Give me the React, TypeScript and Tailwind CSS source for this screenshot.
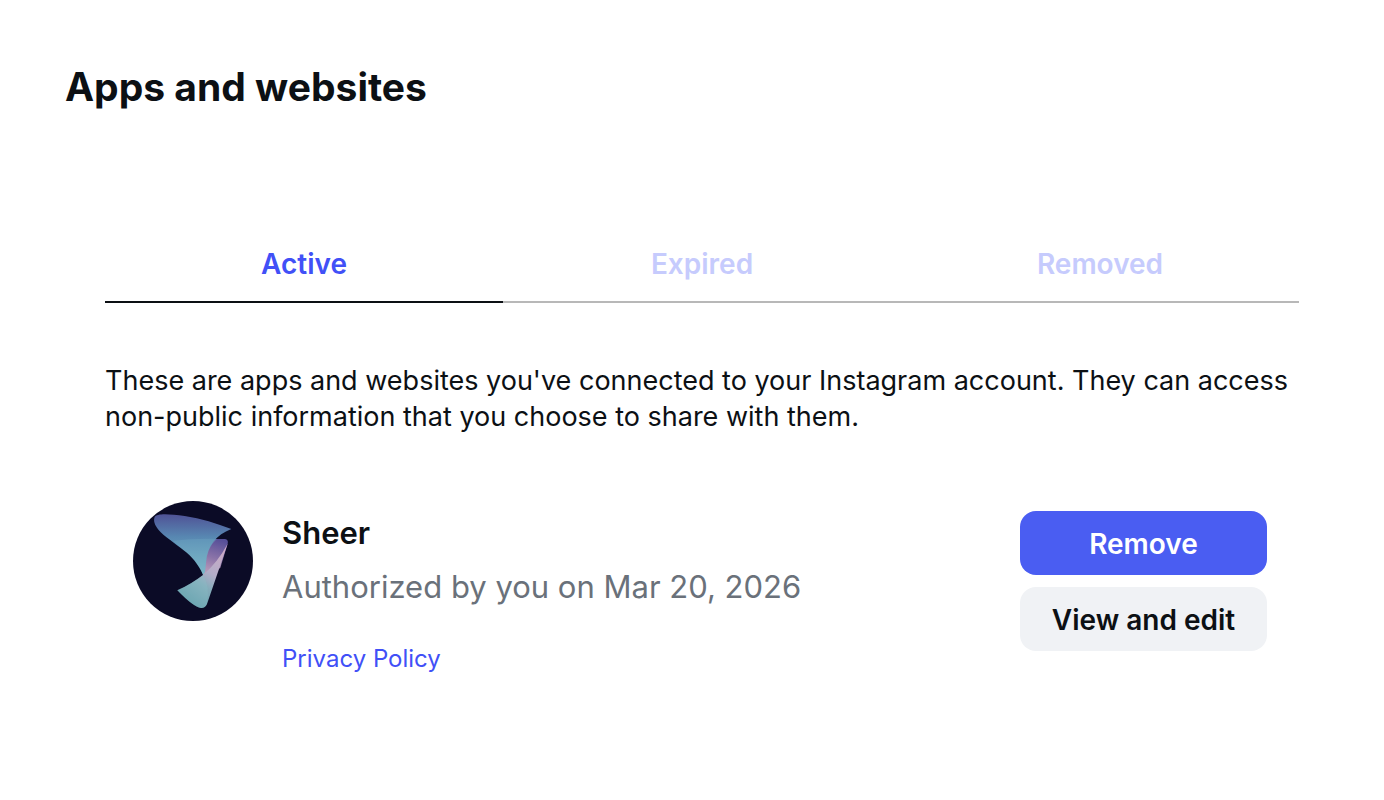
import { useState } from "react";

const tabs = ["Active", "Expired", "Removed"];

function SheerLogo() {
  return (
    <svg
      viewBox="0 0 360 360"
      className="size-[120px] shrink-0"
      role="img"
      aria-label="Sheer"
    >
      <defs>
        <linearGradient id="sail" x1="0" y1="0" x2="0" y2="1">
          <stop offset="0" stopColor="#4f5296" />
          <stop offset="0.38" stopColor="#5888b2" />
          <stop offset="0.65" stopColor="#6a9fbc" />
          <stop offset="1" stopColor="#7db8c8" />
        </linearGradient>
        <linearGradient id="fold" x1="0.6" y1="0" x2="0.4" y2="1">
          <stop offset="0" stopColor="#574f98" />
          <stop offset="0.5" stopColor="#8a73a8" />
          <stop offset="1" stopColor="#c3a3bd" />
        </linearGradient>
        <linearGradient id="keel" x1="0.9" y1="0" x2="0.35" y2="1">
          <stop offset="0" stopColor="#d0aac5" />
          <stop offset="0.45" stopColor="#b3adc8" />
          <stop offset="0.65" stopColor="#86adbb" />
          <stop offset="1" stopColor="#5f9aa8" />
        </linearGradient>
      </defs>
      <circle cx="180" cy="180" r="180" fill="#0b0b26" />
      {/* lower right fold */}
      <path
        d="M235 114 L276 114 Q287 116 284 128 L262 200 L222 228 L210 222 L205 160Z"
        fill="url(#fold)"
      />
      {/* upper sail */}
      <path
        d="M65 48 C72 36 110 39 155 45 C205 53 250 67 295 84 C250 101 222 135 219 185 L216 214 L210 221 C195 188 176 166 152 148 C128 128 91 104 77 87 C66 73 60 60 65 48Z"
        fill="url(#sail)"
      />
      <path
        d="M120 119 Q180 112 252 114 Q222 140 219 185 L216 214 L210 221 C195 188 176 166 152 148Z"
        fill="#79b9cd"
        fillOpacity="0.25"
      />
      {/* bottom keel */}
      <path
        d="M133 268 Q174 250 210 222 Q254 184 284 128 L222 309 Q216 322 204 321 Q181 318 133 268Z"
        fill="url(#keel)"
      />
      <path
        d="M210 222 Q231 255 222 309 Q216 322 204 321 Q181 318 133 268 Q174 250 210 222Z"
        fill="#8cc5cb"
        fillOpacity="0.3"
      />
    </svg>
  );
}

export default function App() {
  const [active, setActive] = useState("Active");

  return (
    <main className="min-h-screen bg-white px-[65px] pt-[62px] font-['Inter',sans-serif] text-[#0c1014]">
      <h1 className="text-[39px] leading-[50px] font-bold">
        Apps and websites
      </h1>

      <section className="mt-[114px] pr-5 pl-10">
        <div role="tablist" className="flex">
          {tabs.map((tab) => (
            <button
              key={tab}
              type="button"
              role="tab"
              aria-selected={tab === active}
              onClick={() => setActive(tab)}
              className={`flex-1 cursor-pointer border-b-2 pt-5 pb-[19px] text-[28px] leading-9 font-semibold ${
                tab === active
                  ? "border-[#0c1014] text-[#4150f7]"
                  : "border-[#b8b8b8] text-[#c6cbfd]"
              }`}
            >
              {tab}
            </button>
          ))}
        </div>

        <p className="mt-[60px] text-[27px] leading-9">
          These are apps and websites you've connected to your Instagram
          account. They can access non-public information that you choose to
          share with them.
        </p>

        <div className="mt-[66px] flex items-start pr-8 pl-7">
          <SheerLogo />
          <div className="ml-[29px] flex-1 pt-3">
            <h2 className="text-[31px] leading-10 font-semibold">Sheer</h2>
            <p className="mt-3.5 text-[31px] leading-10 text-[#6a717a]">
              Authorized by you on Mar 20, 2026
            </p>
            <a
              href="#privacy"
              className="mt-9 block w-fit text-2xl leading-8 text-[#4150f7]"
            >
              Privacy Policy
            </a>
          </div>
          <div className="flex w-[247px] flex-col gap-3 pt-2.5">
            <button
              type="button"
              className="h-16 cursor-pointer rounded-2xl bg-[#4a5df2] pt-0.5 text-[28px] font-semibold text-white"
            >
              Remove
            </button>
            <button
              type="button"
              className="h-16 cursor-pointer rounded-2xl bg-[#f0f2f5] pt-0.5 text-[28px] font-semibold"
            >
              View and edit
            </button>
          </div>
        </div>
      </section>
    </main>
  );
}
